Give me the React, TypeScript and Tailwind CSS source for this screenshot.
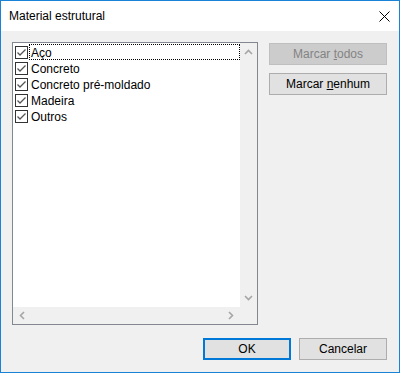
import React from "react";

const items = ["Aço", "Concreto", "Concreto pré-moldado", "Madeira", "Outros"];

function CheckBox() {
  return (
    <svg width="13" height="13" viewBox="0 0 13 13" className="mt-[2px] shrink-0">
      <rect x="0.5" y="0.5" width="12" height="12" fill="#fff" stroke="#333" />
      <polyline points="2.5,6.5 5,9 10.5,3.5" fill="none" stroke="#555" strokeWidth="1.3" />
    </svg>
  );
}

function Chevron({ dir }: { dir: "up" | "down" | "left" | "right" }) {
  const pts = {
    up: "1,5 4.5,1.5 8,5",
    down: "1,2 4.5,5.5 8,2",
    left: "5,1 1.5,4.5 5,8",
    right: "2,1 5.5,4.5 2,8",
  }[dir];
  const vertical = dir === "up" || dir === "down";
  return (
    <svg width={vertical ? 9 : 7} height={vertical ? 7 : 9} viewBox={vertical ? "0 0 9 7" : "0 0 7 9"}>
      <polyline points={pts} fill="none" stroke="#a6a6a6" strokeWidth="1.6" />
    </svg>
  );
}

export default function App() {
  return (
    <div className="flex h-[373px] w-[400px] flex-col border border-[#1883d7] bg-[#f0f0f0] font-['Liberation_Sans',Arial,sans-serif] text-[12px] text-black">
      {/* title bar */}
      <div className="flex h-[30px] items-center justify-between bg-white pl-[8px] pr-[9px]">
        <span className="leading-none">Material estrutural</span>
        <svg width="11" height="11" viewBox="0 0 11 11">
          <path d="M0.5 0.5 L10.5 10.5 M10.5 0.5 L0.5 10.5" stroke="#000" strokeWidth="1" />
        </svg>
      </div>

      <div className="flex flex-1 flex-col pl-[11px] pr-[11px] pt-[11px]">
        <div className="flex gap-[11px]">
          {/* list box */}
          <div className="grid h-[283px] w-[246px] grid-cols-[227px_17px] grid-rows-[264px_17px] border border-[#828790] bg-white">
            <div className="flex flex-col pl-[2px] pt-[1px]">
              {items.map((it, i) => (
                <div key={it} className="flex h-[16px] items-start gap-[1px]">
                  <CheckBox />
                  <span
                    className={
                      "flex h-[16px] flex-1 items-center pl-[1px] pt-[1px] leading-[16px] " +
                      (i === 0 ? "border border-dotted border-black" : "border border-transparent")
                    }
                  >
                    {it}
                  </span>
                </div>
              ))}
            </div>
            <div className="flex flex-col items-center justify-between bg-[#f0f0f0] py-[6px]">
              <Chevron dir="up" />
              <Chevron dir="down" />
            </div>
            <div className="flex items-center justify-between bg-[#f0f0f0] px-[6px]">
              <Chevron dir="left" />
              <Chevron dir="right" />
            </div>
            <div className="bg-[#f0f0f0]" />
          </div>

          {/* side buttons */}
          <div className="mt-[1px] flex w-[118px] flex-col gap-[8px]">
            <div className="flex h-[22px] items-center justify-center border border-[#bfbfbf] bg-[#cccccc] text-[#838383]">
              <span>
                Marcar <span className="underline">t</span>odos
              </span>
            </div>
            <div className="flex h-[22px] items-center justify-center border border-[#adadad] bg-[#e1e1e1]">
              <span>
                Marcar <span className="underline">n</span>enhum
              </span>
            </div>
          </div>
        </div>

        {/* footer */}
        <div className="mt-[13px] flex justify-end gap-[8px] pr-[1px]">
          <div className="flex h-[22px] w-[88px] items-center justify-center border-2 border-[#0078d7] bg-[#e1e1e1]">
            OK
          </div>
          <div className="flex h-[22px] w-[88px] items-center justify-center border border-[#adadad] bg-[#e1e1e1]">
            Cancelar
          </div>
        </div>
      </div>
    </div>
  );
}
